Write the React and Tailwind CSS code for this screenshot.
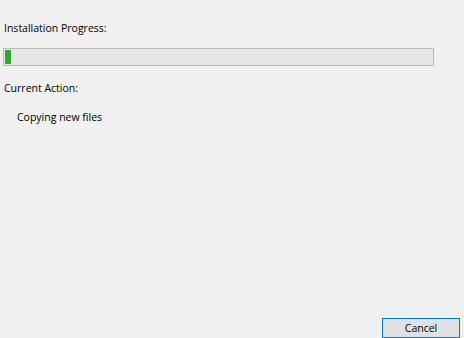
export default function App() {
  return (
    <div className="w-[464px] h-[338px] bg-[#f0f0f0] flex flex-col text-[10.5px] text-black font-['Segoe_UI','Open_Sans',sans-serif] overflow-hidden">
      <div className="pl-[4px] pt-[20px] h-[48px] leading-[16px]">Installation Progress:</div>
      <div className="ml-[3px] w-[431px] h-[18px] border border-[#bcbcbc] bg-[#e6e6e6] p-[1px]">
        <div className="h-full w-[6px] bg-[#2fa82f]" />
      </div>
      <div className="pl-[4px] pt-[14px] leading-[16px]">Current Action:</div>
      <div className="pl-[17px] pt-[13px] leading-[16px]">Copying new files</div>
      <div className="flex-1" />
      <div className="flex justify-end pr-[4px]">
        <button className="w-[78px] h-[20px] border border-[#0078d7] bg-[#e1e1e1] leading-[16px] text-[10.5px]">
          Cancel
        </button>
      </div>
    </div>
  );
}
